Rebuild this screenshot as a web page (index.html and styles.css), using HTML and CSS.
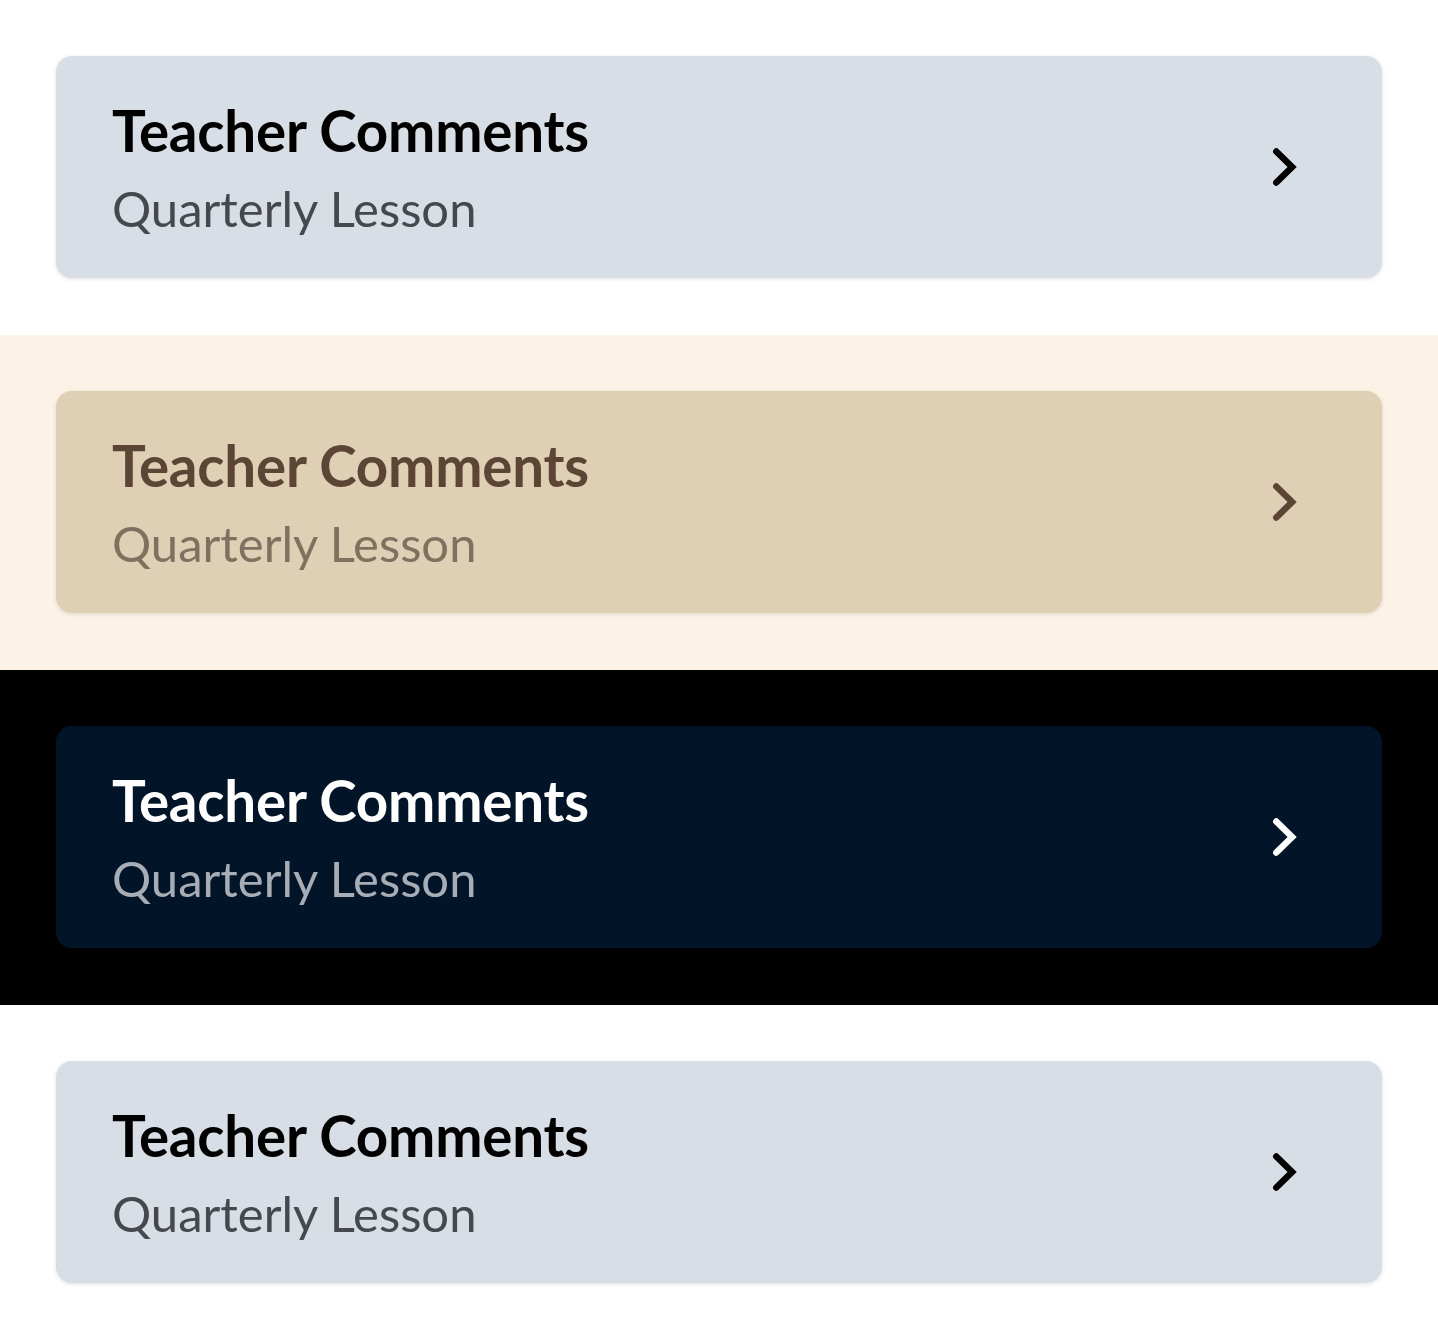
FILE: index.html
```html
<!DOCTYPE html>
<html>
<head>
<meta charset="utf-8">
<link rel="stylesheet" href="styles.css">
</head>
<body>
<section class="theme theme-light">
  <a class="card">
    <div class="text">
      <div class="title">Teacher Comments</div>
      <div class="subtitle">Quarterly Lesson</div>
    </div>
    <svg class="chev" viewBox="0 0 26 40" width="26" height="40"><path d="M4.3 4.5 L20.1 20 L4.3 35.5" fill="none" stroke="currentColor" stroke-width="6.5" stroke-linecap="round" stroke-linejoin="miter"/></svg>
  </a>
</section>
<section class="theme theme-sepia">
  <a class="card">
    <div class="text">
      <div class="title">Teacher Comments</div>
      <div class="subtitle">Quarterly Lesson</div>
    </div>
    <svg class="chev" viewBox="0 0 26 40" width="26" height="40"><path d="M4.3 4.5 L20.1 20 L4.3 35.5" fill="none" stroke="currentColor" stroke-width="6.5" stroke-linecap="round" stroke-linejoin="miter"/></svg>
  </a>
</section>
<section class="theme theme-dark">
  <a class="card">
    <div class="text">
      <div class="title">Teacher Comments</div>
      <div class="subtitle">Quarterly Lesson</div>
    </div>
    <svg class="chev" viewBox="0 0 26 40" width="26" height="40"><path d="M4.3 4.5 L20.1 20 L4.3 35.5" fill="none" stroke="currentColor" stroke-width="6.5" stroke-linecap="round" stroke-linejoin="miter"/></svg>
  </a>
</section>
<section class="theme theme-light">
  <a class="card">
    <div class="text">
      <div class="title">Teacher Comments</div>
      <div class="subtitle">Quarterly Lesson</div>
    </div>
    <svg class="chev" viewBox="0 0 26 40" width="26" height="40"><path d="M4.3 4.5 L20.1 20 L4.3 35.5" fill="none" stroke="currentColor" stroke-width="6.5" stroke-linecap="round" stroke-linejoin="miter"/></svg>
  </a>
</section>
</body>
</html>
```
FILE: styles.css
```css
html, body {
  margin: 0;
  padding: 0;
}
body {
  font-family: Lato, "Liberation Sans", sans-serif;
}
.theme {
  height: 335px;
  box-sizing: border-box;
  padding: 56px;
}
.card {
  display: flex;
  align-items: center;
  justify-content: space-between;
  height: 222px;
  box-sizing: border-box;
  padding: 0 84px 0 56px;
  border-radius: 16px;
}
.text {
  display: flex;
  flex-direction: column;
  margin-top: 1px;
}
.title {
  font-weight: 700;
  font-size: 56.5px;
  line-height: 1.2;
  letter-spacing: -0.2px;
}
.subtitle {
  font-size: 49px;
  line-height: 1.2;
  margin-top: 14px;
}
.chev {
  display: block;
}
.theme-light { background: #ffffff; }
.theme-light .card {
  background: #d8dee6;
  box-shadow: 0 1px 4px rgba(0,0,0,0.12);
}
.theme-light .title { color: #000000; }
.theme-light .subtitle { color: #45484c; }
.theme-light .chev { color: #000000; }

.theme-sepia { background: #fcf3e6; }
.theme-sepia .card {
  background: #dfcfb5;
  box-shadow: 0 1px 4px rgba(0,0,0,0.12);
}
.theme-sepia .title { color: #5c4535; }
.theme-sepia .subtitle { color: #807060; }
.theme-sepia .chev { color: #5c4535; }

.theme-dark { background: #000000; }
.theme-dark .card { background: #011428; }
.theme-dark .title { color: #ffffff; }
.theme-dark .subtitle { color: #a6adb6; }
.theme-dark .chev { color: #ffffff; }
```
